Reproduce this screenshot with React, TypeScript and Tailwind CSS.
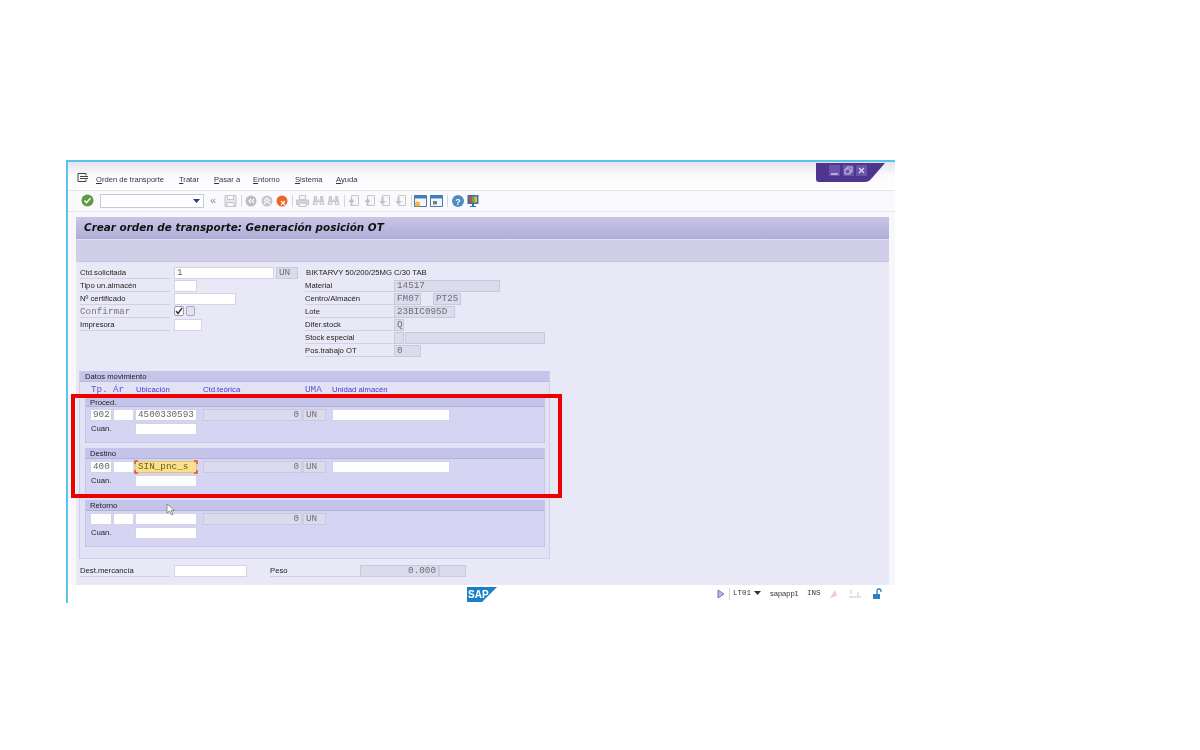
import type { ReactNode } from "react";

const sans = "font-['Liberation_Sans',sans-serif]";
const mono = "font-['Liberation_Mono',monospace]";

const Field = ({
  w,
  children,
  kind = "input",
  right,
  className = "",
}: {
  w: string;
  children?: ReactNode;
  kind?: "input" | "display" | "active";
  right?: boolean;
  className?: string;
}) => {
  const look =
    kind === "input"
      ? "bg-white border-[#d3d2e6] text-[#666]"
      : kind === "active"
        ? "bg-[#fbe08c] border-[#e6c766] text-[#6b5a24]"
        : "bg-[#dcdbee] border-[#c9c8dc] text-[#707070]";
  return (
    <div
      className={`${w} ${look} ${mono} ${right ? "justify-end" : ""} ${className} h-[12px] shrink-0 border flex items-center px-[2px] text-[9.3px] leading-none whitespace-nowrap`}
    >
      {children}
    </div>
  );
};

const Label = ({ w, children, className = "" }: { w: string; children: ReactNode; className?: string }) => (
  <div className={`${w} ${sans} ${className} h-[12px] shrink-0 border-b border-[#d2d1e4] text-[7.7px] leading-[11px] text-[#222] whitespace-nowrap`}>
    {children}
  </div>
);

const Row = ({ children }: { children: ReactNode }) => <div className="flex h-[13px] items-start">{children}</div>;

const MenuItem = ({ first, rest, w }: { first: string; rest: string; w: string }) => (
  <span className={`${w} ${sans} text-[7.6px] text-[#33334d] whitespace-nowrap`}>
    <span className="underline">{first}</span>
    {rest}
  </span>
);

const Sep = ({ w = "w-[10px]" }: { w?: string }) => (
  <div className={`${w} flex shrink-0 justify-center`}>
    <div className="h-[12px] w-px bg-[#d5d5dd]" />
  </div>
);

const Gray = ({ children }: { children: ReactNode }) => (
  <svg width="15.5" height="14" viewBox="0 0 15.5 14" className="shrink-0">
    {children}
  </svg>
);

const RoundIcon = ({ color, mark }: { color: string; mark: string }) => (
  <Gray>
    <circle cx="7" cy="7" r="5.5" fill={color} />
    <path d={mark} stroke="#fff" strokeWidth="1.1" fill="none" />
  </Gray>
);

const SaveIcon = () => (
  <Gray>
    <path d="M2 1.5h11v11H2z" fill="#e9e9ed" stroke="#c4c4cb" />
    <path d="M4.5 1.5h6v4h-6zM4 8.5h7v4H4z" fill="#fbfbfc" stroke="#c4c4cb" />
  </Gray>
);

const PrintIcon = () => (
  <Gray>
    <path d="M4.5 1.5h6v4h-6z" fill="#f6f6f8" stroke="#c4c4ca" />
    <path d="M1.5 6h12v4.5h-12z" fill="#d4d4d9" stroke="#c4c4ca" />
    <path d="M4 9h7v3.5H4z" fill="#f6f6f8" stroke="#c4c4ca" />
  </Gray>
);

const FindIcon = () => (
  <Gray>
    <path d="M3 2h3v4.5h1v-2h1v2h1V2h3l1.5 9h-4.500L8.500 8h-2L6 11H1.500z" fill="#cbcbd0" />
    <path d="M3.500 8h1.500v2h-1.500zM10 8h1.500v2H10z" fill="#f4f4f6" />
  </Gray>
);

const PageIcon = ({ up }: { up: boolean }) => (
  <Gray>
    <path d="M4.500 1.500h7v10h-7z" fill="#f6f6f8" stroke="#c6c6cc" />
    <path d={up ? "M1.500 8l3-4 3 4h-2v4h-2V8z" : "M1.500 7l3 4 3-4h-2V3h-2v4z"} fill="#c0c0c6" />
  </Gray>
);

const NewWindowIcon = () => (
  <Gray>
    <path d="M1.500 1.500h12v11h-12z" fill="#f5f5f7" stroke="#4d79a8" />
    <path d="M1.500 1.500h12v3h-12z" fill="#3f7fbf" />
    <circle cx="4.500" cy="10" r="2.500" fill="#f6b62d" />
  </Gray>
);

const LayoutIcon = () => (
  <Gray>
    <path d="M1.500 1.500h12v11h-12z" fill="#f5f5f7" stroke="#4d79a8" />
    <path d="M1.500 1.500h12v3h-12z" fill="#3f7fbf" />
    <path d="M4 7h4v3.500H4z" fill="#6a7f98" />
  </Gray>
);

const Monitor = () => (
  <Gray>
    <path d="M1.500 1h11v9h-11z" fill="#3b6fa5" />
    <path d="M3 2.500h2.700v6H3z" fill="#d4483a" />
    <path d="M5.700 2.500h2.700v6H5.700z" fill="#5bb04d" />
    <path d="M8.400 2.500h2.700v6H8.400z" fill="#e8b93a" />
    <path d="M6 10h2v2h2v1H4v-1h2z" fill="#3b6fa5" />
  </Gray>
);

const MoveRow = ({ a, b, loc, active }: { a?: string; b?: string; loc?: string; active?: boolean }) => (
  <div className="flex items-start pl-[4px]">
    <Field w="w-[22px]">{a}</Field>
    <Field w="w-[21px]" className="ml-px">{b}</Field>
    <Field w="w-[62px]" className="ml-px" kind={active ? "active" : "input"}>
      {loc}
    </Field>
    <Field w="w-[99px]" className="ml-[6px]" kind="display" right>
      0
    </Field>
    <Field w="w-[23px]" className="ml-px" kind="display">
      UN
    </Field>
  </div>
);

const SubGroup = ({
  title,
  h,
  headH,
  children,
  extra,
}: {
  title: string;
  h: string;
  headH: string;
  children: ReactNode;
  extra?: ReactNode;
}) => (
  <div className={`${h} ml-[5px] w-[460px] border-x border-b border-[#c6c5e6] bg-[#d5d5f3]`}>
    <div className={`${headH} ${sans} border-b border-[#b2b1da] bg-[#c4c3ea] pl-[4px] text-[7.7px] leading-[11px] text-[#222]`}>
      {title}
    </div>
    <div className="flex pt-[2px]">
      {children}
      {extra}
    </div>
    <div className="flex items-start pl-[4px] pt-[2px]">
      <div className={`${sans} w-[45px] pl-px text-[7.7px] leading-[11px] text-[#222]`}>Cuan.</div>
      <Field w="w-[62px]" />
    </div>
  </div>
);

const Unit = () => <Field w="w-[118px]" className="ml-[6px]" />;

export default function App() {
  return (
    <div className="relative h-[750px] w-[1200px] overflow-hidden bg-white pl-[66px] pt-[160px]">
      <div className="flex h-[443px] w-[829px] flex-col border-l-2 border-t-2 border-[#5cc4e8] bg-[#f8f8fc] blur-[0.6px]">
        {/* menu bar */}
        <div className="relative flex h-[28px] shrink-0 items-center bg-gradient-to-b from-[#e4e3f0] via-[#fbfbfe] to-white pl-[9px] pt-[8px]">
          <svg width="12" height="10" viewBox="0 0 12 10" className="-mt-[5px] mr-[7px] shrink-0">
            <path d="M1 .5h8v2M1 .5v8h8v-2M3 3.500h8M3 5.500h8" stroke="#444" fill="none" />
          </svg>
          <MenuItem first="O" rest="rden de transporte" w="w-[83px]" />
          <MenuItem first="T" rest="ratar" w="w-[35px]" />
          <MenuItem first="P" rest="asar a" w="w-[39px]" />
          <MenuItem first="E" rest="ntorno" w="w-[42px]" />
          <MenuItem first="S" rest="istema" w="w-[41px]" />
          <MenuItem first="A" rest="yuda" w="w-[30px]" />
          <svg width="70" height="20" viewBox="0 0 70 20" className="absolute right-[9px] top-[1px]">
            <path d="M0 0h69l-13 15q-3 4-7 4H3q-3 0-3-3z" fill="#50358f" />
            <rect x="13" y="2" width="11" height="11" fill="#6a53a8" />
            <path d="M15 11h7" stroke="#cfcae8" strokeWidth="1.500" />
            <rect x="27" y="2" width="11" height="11" fill="#6a53a8" />
            <path d="M29 6h5v5h-5zM31 6V4h5v5h-2" stroke="#cfcae8" fill="none" />
            <rect x="40" y="2" width="11" height="11" fill="#6a53a8" />
            <path d="M43 5l5 5M48 5l-5 5" stroke="#dcd8f0" strokeWidth="1.300" />
          </svg>
        </div>

        {/* toolbar */}
        <div className="flex h-[22px] shrink-0 items-center border-y border-[#e4e4ec] bg-[#fafafd] pb-px pl-[13px]">
          <svg width="13" height="13" viewBox="0 0 13 13" className="mr-[6px] shrink-0">
            <circle cx="6.500" cy="6.500" r="6" fill="#5d9a45" />
            <path d="M3.500 6.500l2 2.200 4-4.400" stroke="#fff" strokeWidth="1.500" fill="none" />
          </svg>
          <div className="flex h-[14px] w-[104px] shrink-0 items-center justify-end border border-[#c9c9d6] bg-white pr-[3px]">
            <svg width="7" height="4" viewBox="0 0 7 4">
              <path d="M0 0h7L3.500 4z" fill="#2a3b7c" />
            </svg>
          </div>
          <span className={`${sans} ml-[6px] w-[13px] text-[11px] leading-none text-[#8a8a94]`}>«</span>
          <SaveIcon />
          <Sep w="w-[5.5px]" />
          <RoundIcon color="#bcbcc2" mark="M7 5l-2 2 2 2M10 5L8 7l2 2" />
          <RoundIcon color="#c6c6cb" mark="M4 7l3-3 3 3M4 10l3-3 3 3" />
          <RoundIcon color="#e8682a" mark="M6 7l4 4M10 7l-4 4" />
          <Sep w="w-[4.5px]" />
          <PrintIcon />
          <FindIcon />
          <FindIcon />
          <Sep w="w-[5.5px]" />
          <PageIcon up />
          <PageIcon up />
          <PageIcon up={false} />
          <PageIcon up={false} />
          <Sep w="w-[4px]" />
          <NewWindowIcon />
          <LayoutIcon />
          <Sep w="w-[7px]" />
          <svg width="15" height="14" viewBox="0 0 15 14" className="shrink-0">
            <circle cx="7" cy="7" r="6" fill="#4a8cc4" />
            <text x="7" y="10.500" textAnchor="middle" fontSize="9" fontWeight="bold" fill="#fff" fontFamily="Liberation Sans, sans-serif">
              ?
            </text>
          </svg>
          <Monitor />
        </div>

        {/* main panel */}
        <div className="ml-[8px] mt-[5px] flex h-[368px] w-[813px] shrink-0 flex-col bg-[#e9e8f6]">
          <div className="flex h-[22px] shrink-0 items-center bg-gradient-to-b from-[#c9c7e6] to-[#b0acd8] pl-[8px]">
            <span className="font-['DejaVu_Sans',sans-serif] text-[10.4px] font-bold italic text-[#111]">
              Crear orden de transporte: Generación posición OT
            </span>
          </div>
          <div className="h-[23px] shrink-0 border-y border-[#c6c4e2] border-t-[#e0dff2] bg-[#d0cee9]" />

          {/* header fields */}
          <div className="flex h-[109px] shrink-0 pt-[5px]">
            <div className="ml-[4px] w-[225px]">
              <Row>
                <Label w="w-[90px]" className="mr-[4px]">Ctd.solicitada</Label>
                <Field w="w-[100px]">1</Field>
                <Field w="w-[22px]" className="ml-[2px]" kind="display">UN</Field>
              </Row>
              <Row>
                <Label w="w-[90px]" className="mr-[4px]">Tipo un.almacén</Label>
                <Field w="w-[23px]" />
              </Row>
              <Row>
                <Label w="w-[90px]" className="mr-[4px]">Nº certificado</Label>
                <Field w="w-[62px]" />
              </Row>
              <Row>
                <div className={`${mono} mr-[4px] h-[12px] w-[90px] border-b border-[#d2d1e4] text-[9.300px] leading-[11px] text-[#777]`}>
                  Confirmar
                </div>
                <div className="flex h-[10px] w-[10px] items-center justify-center rounded-[2px] border border-[#9b9ab0] bg-white">
                  <svg width="8" height="8" viewBox="0 0 8 8">
                    <path d="M1 4l2 2.500L7 1" stroke="#333" strokeWidth="1.400" fill="none" />
                  </svg>
                </div>
                <div className="ml-[2px] h-[10px] w-[9px] rounded-[2px] border border-[#a9a8be] bg-[#e4e3f2]" />
              </Row>
              <Row>
                <Label w="w-[90px]" className="mr-[4px]">Impresora</Label>
                <Field w="w-[28px]" />
              </Row>
            </div>
            <div className="w-[245px]">
              <Row>
                <span className={`${sans} pl-px text-[7.7px] leading-[11px] text-[#222]`}>BIKTARVY 50/200/25MG C/30 TAB</span>
              </Row>
              <Row>
                <Label w="w-[89px]">Material</Label>
                <Field w="w-[106px]" kind="display">14517</Field>
              </Row>
              <Row>
                <Label w="w-[89px]">Centro/Almacén</Label>
                <Field w="w-[27px]" kind="display">FM07</Field>
                <Field w="w-[28px]" className="ml-[12px]" kind="display">PT25</Field>
              </Row>
              <Row>
                <Label w="w-[89px]">Lote</Label>
                <Field w="w-[61px]" kind="display">23BIC095D</Field>
              </Row>
              <Row>
                <Label w="w-[89px]">Difer.stock</Label>
                <Field w="w-[10px]" kind="display">Q</Field>
              </Row>
              <Row>
                <Label w="w-[89px]">Stock especial</Label>
                <Field w="w-[10px]" kind="display" />
                <Field w="w-[140px]" className="ml-px" kind="display" />
              </Row>
              <Row>
                <Label w="w-[89px]">Pos.trabajo OT</Label>
                <Field w="w-[27px]" kind="display">0</Field>
              </Row>
            </div>
          </div>

          {/* Datos movimiento */}
          <div className="ml-[3px] h-[188px] w-[471px] shrink-0 border-x border-b border-[#cfcee8] bg-[#e3e2f5]">
            <div className={`${sans} h-[11px] border-b border-[#b9b8de] bg-[#c6c4e8] pl-[5px] text-[7.7px] leading-[11px] text-[#222]`}>
              Datos movimiento
            </div>
            <div className="flex h-[15px] items-center pt-px text-[#3a3ad0]">
              <span className={`${mono} ml-[11px] w-[22px] text-[9.300px] text-[#5a5ac8]`}>Tp.</span>
              <span className={`${mono} w-[23px] text-[9.300px] text-[#5a5ac8]`}>Ár</span>
              <span className={`${sans} w-[67px] text-[7.7px]`}>Ubicación</span>
              <span className={`${sans} w-[102px] text-[7.7px]`}>Ctd.teórica</span>
              <span className={`${mono} w-[27px] text-[9.300px] text-[#5a5ac8]`}>UMA</span>
              <span className={`${sans} text-[7.7px]`}>Unidad almacén</span>
            </div>
            <SubGroup title="Proced." h="h-[46px]" headH="h-[10px]" extra={<Unit />}>
              <MoveRow a="902" loc="4500330593" />
            </SubGroup>
            <div className="h-[5px]" />
            <SubGroup title="Destino" h="h-[47px]" headH="h-[11px]" extra={<Unit />}>
              <MoveRow a="400" loc="SIN_pnc_s" active />
            </SubGroup>
            <div className="h-[5px]" />
            <SubGroup title="Retorno" h="h-[47px]" headH="h-[11px]">
              <MoveRow />
            </SubGroup>
          </div>

          {/* bottom row */}
          <div className="ml-[4px] mt-[6px] flex items-start">
            <Label w="w-[90px]" className="mr-[4px]">Dest.mercancía</Label>
            <Field w="w-[73px]" />
            <Label w="w-[90px]" className="ml-[23px]">Peso</Label>
            <Field w="w-[79px]" kind="display" right>
              0.000
            </Field>
            <Field w="w-[27px]" kind="display" />
          </div>
        </div>

        {/* status bar */}
        <div className="flex h-[18px] shrink-0 items-center bg-white pl-[399px]">
          <svg width="30" height="15" viewBox="0 0 30 15" className="shrink-0">
            <path d="M0 0h30L15 15H0z" fill="#1a7fc8" />
            <text x="1" y="11" fontSize="10" fontWeight="bold" fill="#fff" fontFamily="Liberation Sans, sans-serif">
              SAP
            </text>
          </svg>
          <svg width="8" height="10" viewBox="0 0 8 10" className="ml-[220px] shrink-0">
            <path d="M1 1l6 4-6 4z" fill="#b9b6e2" stroke="#7b77b8" />
          </svg>
          <Sep w="w-[8px]" />
          <span className={`${mono} w-[20px] text-[7.500px] text-[#333]`}>LT01</span>
          <svg width="7" height="4" viewBox="0 0 7 4" className="mb-[3px] ml-px mr-[9px] shrink-0">
            <path d="M0 0h7L3.500 4z" fill="#333" />
          </svg>
          <span className={`${sans} w-[37px] text-[7.500px] text-[#333]`}>sapapp1</span>
          <span className={`${mono} w-[20px] text-[7.500px] text-[#333]`}>INS</span>
          <svg width="12" height="10" viewBox="0 0 12 10" className="shrink-0">
            <path d="M3 9l5-8 2 6z" fill="#f3c9cc" />
          </svg>
          <svg width="14" height="10" viewBox="0 0 14 10" className="ml-[9px] shrink-0">
            <path d="M1 8h12M3 1v4M10 3v4" stroke="#c9c9d0" fill="none" />
          </svg>
          <svg width="12" height="12" viewBox="0 0 12 12" className="ml-[10px] shrink-0">
            <path d="M1 6h7v5H1z" fill="#2f7fc0" />
            <path d="M5 6V3q0-2 2-2t2 2v1" stroke="#2f7fc0" strokeWidth="1.300" fill="none" />
          </svg>
        </div>
      </div>

      {/* red highlight drawn over the screen */}
      <div className="absolute left-[71px] top-[394px] h-[104px] w-[491px] border-[4px] border-[#ec0000]" />

      {/* field cursor corners */}
      <svg width="64" height="14" viewBox="0 0 64 14" className="absolute left-[134px] top-[460px] blur-[0.4px]">
        <path d="M4 1H1v3M60 1h3v3M4 13H1v-3M60 13h3v-3" stroke="#d9503a" strokeWidth="1.500" fill="none" />
      </svg>

      {/* mouse pointer */}
      <svg width="10" height="13" viewBox="0 0 10 13" className="absolute left-[166px] top-[503px]">
        <path d="M1 1v9l2.500-2 2 4 1.500-.7-2-3.800H8.500z" fill="#fff" stroke="#777" strokeWidth="0.800" />
      </svg>
    </div>
  );
}
